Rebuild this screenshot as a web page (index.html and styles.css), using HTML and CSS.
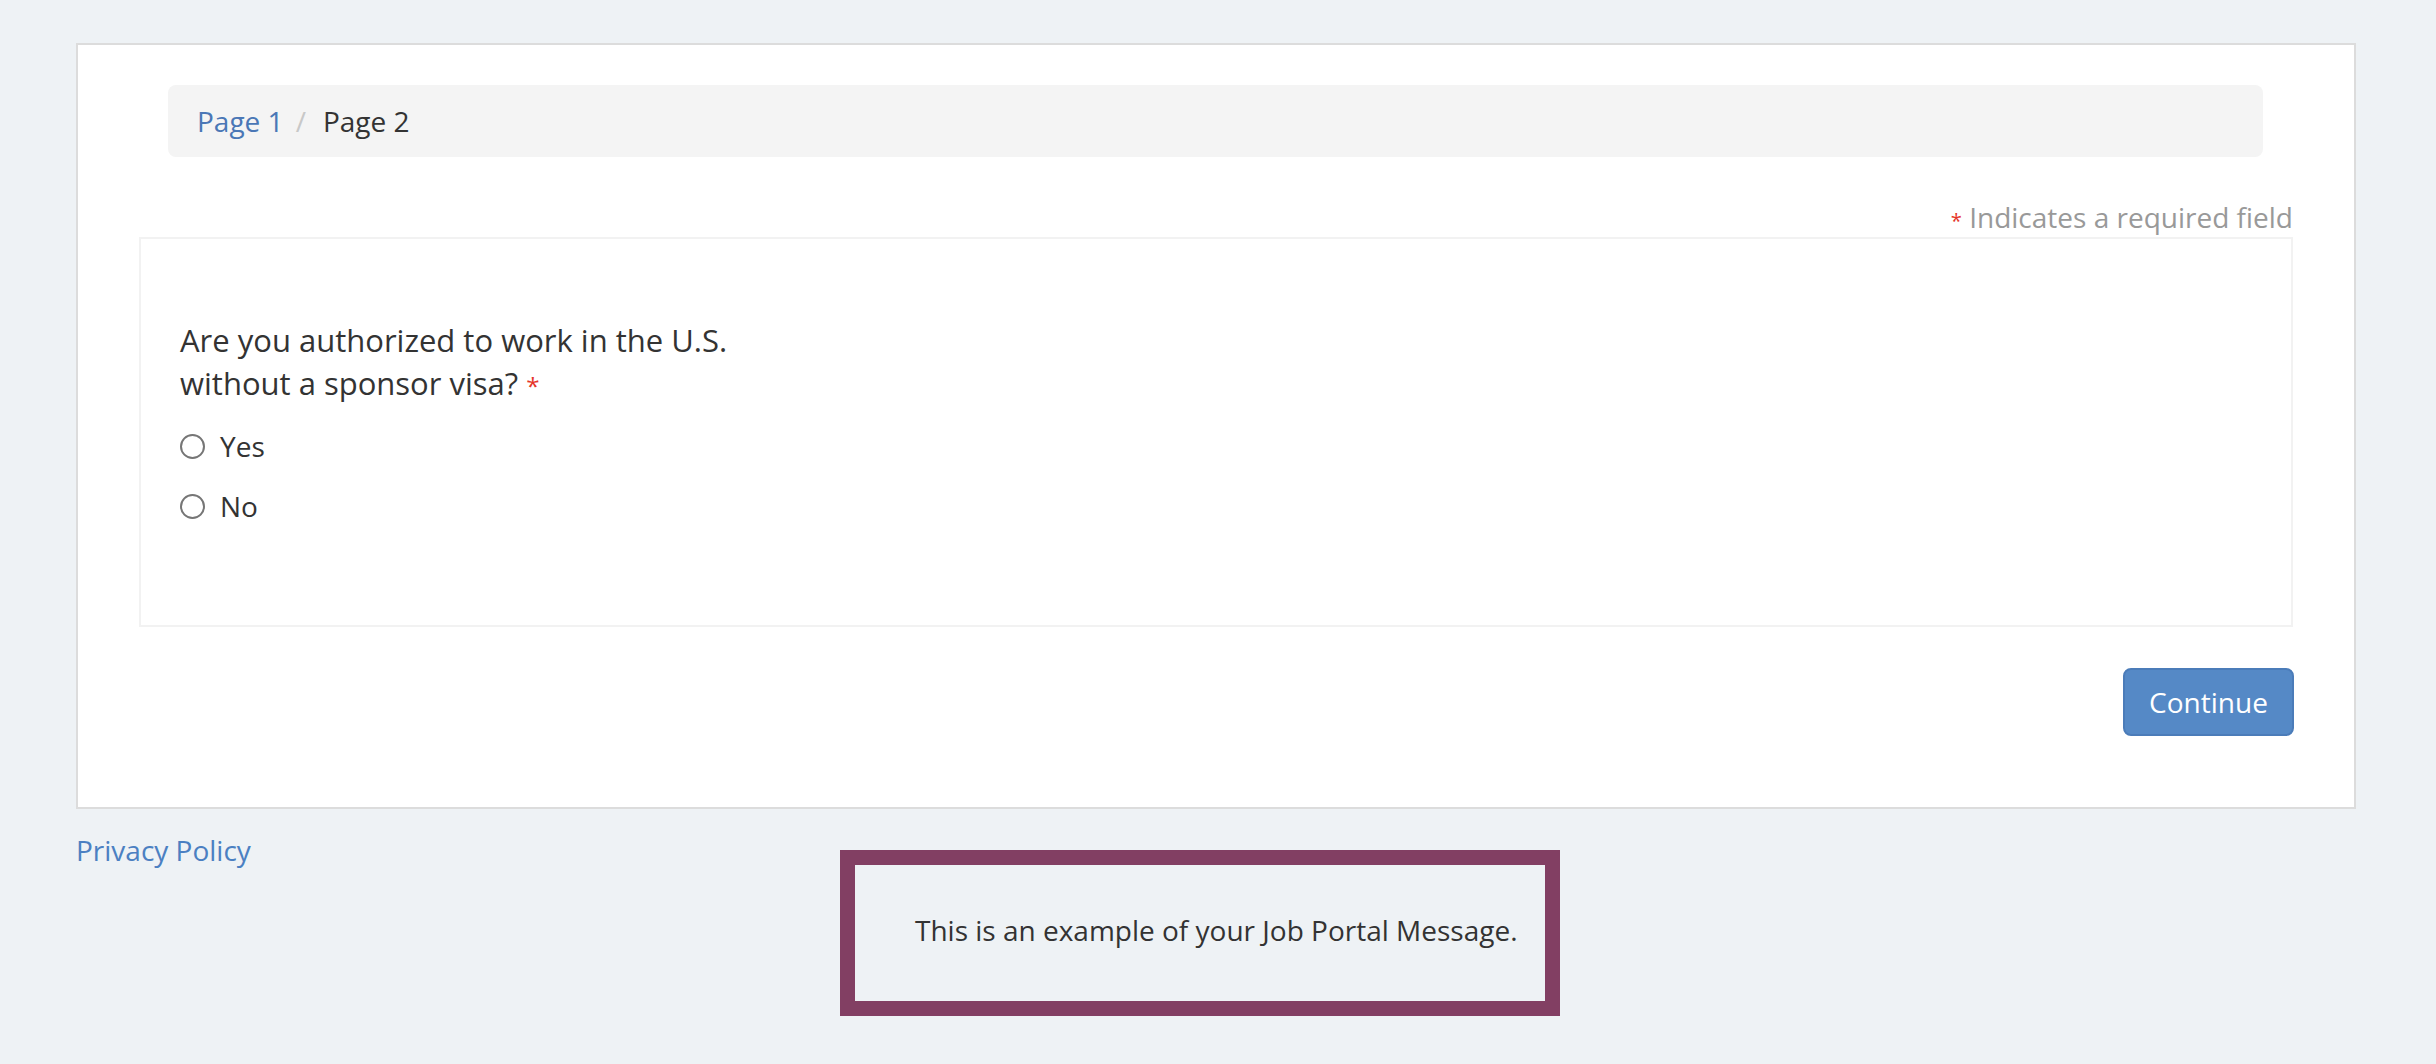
FILE: index.html
```html
<!DOCTYPE html>
<html lang="en">
<head>
<meta charset="utf-8">
<title>Job Portal - Page 2</title>
<link rel="stylesheet" href="styles.css">
</head>
<body>
<div class="page">
  <main class="card">
    <nav class="breadcrumb">
      <a class="crumb-link" href="#">Page 1</a>
      <span class="crumb-sep">/</span>
      <span class="crumb-active">Page 2</span>
    </nav>
    <p class="required-note"><span class="req">*</span> Indicates a required field</p>
    <section class="question-box">
      <div class="question">
        <p class="question-label"><span class="q-line">Are you authorized to work in the U.S.</span><br><span class="q-line">without a sponsor visa?</span> <span class="req req-q">*</span></p>
        <div class="options">
          <label class="option"><input type="radio" name="auth" class="radio"><span>Yes</span></label>
          <label class="option"><input type="radio" name="auth" class="radio"><span>No</span></label>
        </div>
      </div>
    </section>
    <div class="actions">
      <button class="btn-continue" type="button">Continue</button>
    </div>
  </main>
  <footer class="footer">
    <a class="privacy" href="#">Privacy Policy</a>
    <div class="portal-message">
      <p>This is an example of your Job Portal Message.</p>
    </div>
  </footer>
</div>
</body>
</html>
```

FILE: styles.css
```css
* {
  box-sizing: border-box;
}

html, body {
  margin: 0;
  padding: 0;
}

body {
  background: #eef2f5;
  font-family: "Open Sans", "Noto Sans", "Liberation Sans", sans-serif;
  font-size: 28px;
  color: #333333;
  height: 1064px;
  overflow: hidden;
}

.page {
  padding-top: 43px;
  margin-left: 76px;
  width: 2280px;
}

.card {
  background: #ffffff;
  border: 2px solid #dcdcdc;
  padding: 40px 61px 71px 61px;
}

.breadcrumb {
  display: flex;
  align-items: center;
  height: 72px;
  margin: 0 30px 0 29px;
  padding-left: 29px;
  background: #f4f4f4;
  border-radius: 8px;
  line-height: 40px;
}

.crumb-link {
  color: #4a77b6;
  text-decoration: none;
}

.crumb-sep {
  color: #c8c8c8;
  padding: 0 17px 0 12px;
}

.crumb-active {
  color: #333333;
}

.required-note {
  margin: 0;
  padding-top: 40px;
  text-align: right;
  color: #999999;
  line-height: 40px;
  height: 80px;
}

.req {
  color: #e5352a;
  font-size: 0.72em;
  line-height: 1;
}

.req-q {
  font-size: 0.78em;
}

.question-box {
  border: 2px solid #f2f2f2;
  padding: 80px 39px 99px 39px;
}

.question-label {
  margin: 0;
  width: 600px;
  font-size: 31px;
  line-height: 43px;
  color: #333333;
}

.options {
  display: flex;
  flex-direction: column;
  gap: 20px;
  margin-top: 21px;
}

.option {
  display: flex;
  align-items: center;
  height: 40px;
  line-height: 40px;
  color: #333333;
}

.radio {
  appearance: none;
  -webkit-appearance: none;
  width: 25px;
  height: 25px;
  margin: 0 15px 0 0;
  border: 2px solid #767676;
  border-radius: 50%;
  background: #ffffff;
  flex: none;
}

.actions {
  display: flex;
  justify-content: flex-end;
  margin-top: 41px;
  margin-right: -1px;
}

.btn-continue {
  width: 171px;
  height: 68px;
  padding: 0;
  font-family: "Open Sans", "Noto Sans", "Liberation Sans", sans-serif;
  font-size: 28px;
  color: #ffffff;
  background: #5589c6;
  border: 2px solid #4b7cb9;
  border-radius: 8px;
}

.footer {
  display: grid;
  grid-template-columns: 764px 720px;
  align-items: start;
}

.privacy {
  margin-top: 21px;
  color: #4b80c2;
  text-decoration: none;
  line-height: 40px;
  justify-self: start;
}

.portal-message {
  margin-top: 41px;
  height: 166px;
  border: 15px solid #823f63;
  padding: 45px 20px 0 60px;
}

.portal-message p {
  margin: 0;
  line-height: 40px;
  color: #333333;
}
```
